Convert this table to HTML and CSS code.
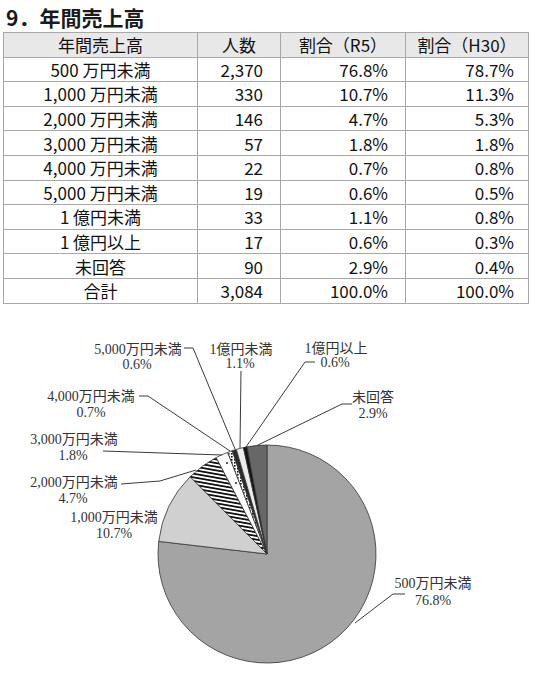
FILE: index.html
```html
<!DOCTYPE html>
<html>
<head>
    <meta charset="utf-8">
    <link rel="stylesheet" href="styles.css">
</head>
<body>
    <h1 class="title">9．年間売上高</h1>

    <table class="sales">
        <colgroup>
            <col class="col-label">
            <col class="col-count">
            <col class="col-r5">
            <col class="col-h30">
        </colgroup>
        <thead>
            <tr><th>年間売上高</th><th>人数</th><th>割合（R5）</th><th>割合（H30）</th></tr>
        </thead>
        <tbody>
            <tr><td>500 万円未満</td><td>2,370</td><td>76.8%</td><td>78.7%</td></tr>
            <tr><td>1,000 万円未満</td><td>330</td><td>10.7%</td><td>11.3%</td></tr>
            <tr><td>2,000 万円未満</td><td>146</td><td>4.7%</td><td>5.3%</td></tr>
            <tr><td>3,000 万円未満</td><td>57</td><td>1.8%</td><td>1.8%</td></tr>
            <tr><td>4,000 万円未満</td><td>22</td><td>0.7%</td><td>0.8%</td></tr>
            <tr><td>5,000 万円未満</td><td>19</td><td>0.6%</td><td>0.5%</td></tr>
            <tr><td>1 億円未満</td><td>33</td><td>1.1%</td><td>0.8%</td></tr>
            <tr><td>1 億円以上</td><td>17</td><td>0.6%</td><td>0.3%</td></tr>
            <tr><td>未回答</td><td>90</td><td>2.9%</td><td>0.4%</td></tr>
            <tr><td>合計</td><td>3,084</td><td>100.0%</td><td>100.0%</td></tr>
        </tbody>
    </table>

    <div class="chart">
        <svg class="pie" width="535" height="363" viewBox="0 310 535 363">
            <defs>
                <pattern id="stripes" width="3.6" height="3.6" patternUnits="userSpaceOnUse" patternTransform="rotate(10)">
                    <rect width="3.6" height="3.6" fill="#fff"/>
                    <rect width="3.6" height="1.8" fill="#111"/>
                </pattern>
                <pattern id="dashes" width="3" height="3" patternUnits="userSpaceOnUse">
                    <rect width="3" height="3" fill="#fff"/>
                    <rect width="1.6" height="1.6" fill="#111"/>
                </pattern>
            </defs>

            <!-- slices, clockwise from 12 o'clock -->
            <path class="slice" fill="#a4a4a4" d="M267,554 L267,445 A109,109 0 1 1 158.73,541.38 Z"/>
            <path class="slice" fill="#d0d0d0" d="M267,554 L158.73,541.38 A109,109 0 0 1 190.15,476.70 Z"/>
            <path class="slice" fill="url(#stripes)" d="M267,554 L190.15,476.70 A109,109 0 0 1 216.18,457.57 Z"/>
            <path class="slice" fill="#fff" d="M267,554 L216.18,457.57 A109,109 0 0 1 227.71,452.33 Z"/>
            <path class="slice" fill="url(#dashes)" d="M267,554 L227.71,452.33 A109,109 0 0 1 232.31,450.67 Z"/>
            <path class="slice" fill="#2a2a2a" d="M267,554 L232.31,450.67 A109,109 0 0 1 236.34,449.40 Z"/>
            <path class="slice" fill="#ececec" d="M267,554 L236.34,449.40 A109,109 0 0 1 243.43,447.58 Z"/>
            <path class="slice" fill="#151515" d="M267,554 L243.43,447.58 A109,109 0 0 1 247.12,446.83 Z"/>
            <path class="slice" fill="#676767" d="M267,554 L247.12,446.83 A109,109 0 0 1 267,445 Z"/>
            <circle cx="227" cy="463" r="1.1" fill="#333"/>
            <circle cx="236" cy="483" r="1.1" fill="#333"/>

            <!-- leader lines -->
            <polyline class="leader" points="184,348 193,348 235,449"/>
            <polyline class="leader" points="241,371 240,448"/>
            <polyline class="leader" points="315,362 305,362 246,447"/>
            <polyline class="leader" points="352,404 342,404 257,445.5"/>
            <polyline class="leader" points="139,396 148,396 230,451"/>
            <polyline class="leader" points="103,451 222,455"/>
            <polyline class="leader" points="121,484 160,481 196,470"/>
            <polyline class="leader" points="405,594 393,594 355,623"/>

            <!-- labels -->
            <text class="lbl" x="138" y="354">5,000万円未満</text>
            <text class="lbl" x="137" y="369">0.6%</text>
            <text class="lbl" x="241" y="354">1億円未満</text>
            <text class="lbl" x="240" y="368">1.1%</text>
            <text class="lbl" x="336" y="353">1億円以上</text>
            <text class="lbl" x="335" y="367">0.6%</text>
            <text class="lbl" x="373" y="402">未回答</text>
            <text class="lbl" x="373" y="418">2.9%</text>
            <text class="lbl" x="91" y="401">4,000万円未満</text>
            <text class="lbl" x="91" y="417">0.7%</text>
            <text class="lbl" x="74" y="444">3,000万円未満</text>
            <text class="lbl" x="73" y="460">1.8%</text>
            <text class="lbl" x="74" y="487">2,000万円未満</text>
            <text class="lbl" x="73" y="503">4.7%</text>
            <text class="lbl" x="114" y="522">1,000万円未満</text>
            <text class="lbl" x="114" y="538">10.7%</text>
            <text class="lbl" x="433" y="588">500万円未満</text>
            <text class="lbl" x="433" y="605">76.8%</text>
        </svg>
    </div>
</body>
</html>
```

FILE: styles.css
```css
body {
    margin: 0;
    padding: 5px 0 0 0;
    font-family: "Noto Sans CJK JP", sans-serif;
    color: #111;
    background: #fff;
}

.title {
    margin: 0 0 3px 6px;
    font-size: 21px;
    font-weight: bold;
    line-height: 24px;
    color: #1a1a1a;
}

.sales {
    margin-left: 3px;
    width: 525px;
    table-layout: fixed;
    border-collapse: collapse;
    border: 1.5px solid #555;
    font-size: 17px;
}

.col-label { width: 194px; }
.col-count { width: 83px; }
.col-r5 { width: 125px; }
.col-h30 { width: 123px; }

.sales th,
.sales td {
    height: 23.6px;
    padding: 0;
    border: 1px solid #a8a8a8;
    line-height: 1;
    font-weight: normal;
    white-space: nowrap;
}

.sales th {
    background: #e8e8e8;
    text-align: center;
}

.sales td {
    text-align: right;
    padding-right: 17px;
}

.sales td:first-child {
    text-align: center;
    padding-right: 0;
}

.sales td:last-child {
    padding-right: 14px;
}

.chart {
    margin-top: 6px;
}

.pie {
    display: block;
}

.slice {
    stroke: #333;
    stroke-width: 0.8;
}

.leader {
    fill: none;
    stroke: #3a3a3a;
    stroke-width: 1;
}

.lbl {
    font-family: "Liberation Serif", "Noto Sans CJK JP", serif;
    font-size: 14px;
    fill: #333;
    text-anchor: middle;
}
```
